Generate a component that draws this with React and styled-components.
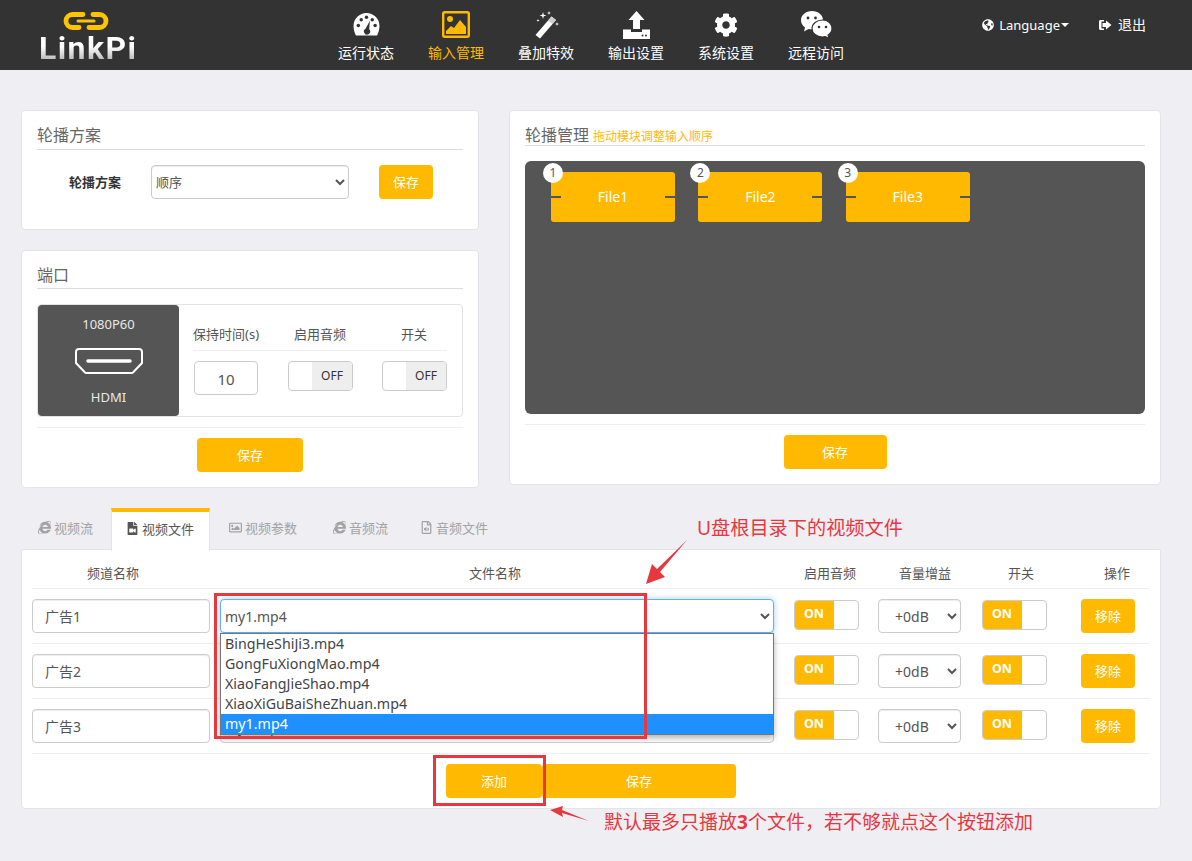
import React from "react";
import styled, { createGlobalStyle } from "styled-components";
import { FaCog, FaInternetExplorer, FaRegImage, FaRegFileAudio, FaFileVideo, FaGlobeAmericas } from "react-icons/fa";

const GOLD = "#ffb900";
const RED = "#e8383f";

const Global = createGlobalStyle`
  html, body { margin: 0; padding: 0; background: #eeeef3; }
  body { font-family: "Noto Sans", "Noto Sans CJK SC", sans-serif; font-size: 13px; color: #555; }
  * { box-sizing: border-box; }
`;

const Page = styled.div`position: relative; width: 1192px; height: 861px; overflow: hidden;`;

const Header = styled.header`display: flex; height: 70px; background: #333; color: #fff;`;
const Logo = styled.div`width: 321px; padding: 11px 0 0 39px; display: flex; flex-direction: column;`;
const LogoMark = styled.svg`width: 46px; height: 20px; margin-left: 24px;`;
const LogoText = styled.div`
  font-family: Roboto, sans-serif; font-weight: 700; font-size: 32px; line-height: 32px; letter-spacing: 1.4px;
  margin-top: 1px;
  background: linear-gradient(#ffffff 45%, #bdbdbd 85%); -webkit-background-clip: text; background-clip: text; color: transparent;
`;
const Nav = styled.nav`display: flex;`;
const NavItem = styled.div`
  width: 90px; height: 70px; display: flex; flex-direction: column; align-items: center;
  color: ${p => (p.$active ? GOLD : "#fff")};
`;
const NavIcon = styled.div`height: 44px; display: flex; align-items: center; justify-content: center; padding-top: 5px; font-size: 24px;`;
const NavLabel = styled.div`font-size: 14px; line-height: 18px;`;
const HeaderRight = styled.div`margin-left: auto; padding: 15px 46px 0 0; display: flex; gap: 30px; font-size: 13px; line-height: 20px;`;
const HeaderLink = styled.div`display: flex; align-items: center; height: 20px; gap: ${p => p.$gap || 5}px;`;
const LinkText = styled.span`font-size: ${p => p.$size || 13}px;`;
const Caret = styled.span`width: 0; height: 0; border: 4px solid transparent; border-top-color: #fff; border-bottom: 0; margin-left: -4px;`;

const TopRow = styled.div`display: grid; grid-template-columns: 458px 652px; column-gap: 30px; padding: 40px 0 0 21px; align-items: start;`;
const LeftColumn = styled.div`display: flex; flex-direction: column; gap: 20px;`;
const Card = styled.section`
  background: #fff; border: 1px solid #e3e4e9; border-radius: 4px; padding: 14px 15px 0;
  height: ${p => p.$height}px;
`;
const CardTitle = styled.h3`
  margin: 0; height: ${p => p.$height}px; border-bottom: 1px solid #ddd; font-weight: 400; font-size: 16px; line-height: 21px; color: #666;
  display: flex; align-items: baseline; gap: 4px;
`;
const Hint = styled.span`font-size: 12px; color: ${GOLD};`;

const SchemeRow = styled.div`display: flex; align-items: center; padding: 15px 0 0 32px;`;
const SchemeLabel = styled.label`width: 82px; font-size: 13px; font-weight: 700; color: #333; padding-bottom: 2px;`;
const NativeSelect = styled.select`
  width: ${p => p.$width}px; height: 34px; background: #fff; border: 1px solid ${p => (p.$focus ? "#66afe9" : "#ccc")};
  border-radius: 4px; font: inherit; font-size: ${p => p.$size || 14}px; color: #555; padding: 0 ${p => p.$pad || 0}px;
  box-shadow: ${p => (p.$focus ? "0 0 6px rgba(102,175,233,.6)" : "inset 0 1px 1px rgba(0,0,0,.075)")};
  outline: none; display: block;
`;
const GoldButton = styled.button`
  width: ${p => p.$width}px; height: 34px; background: ${GOLD}; color: #fff; border: 0; border-radius: 4px;
  font: inherit; font-size: 13px; margin-left: ${p => p.$left || 0}px; padding: 0 0 2px; display: block;
`;
const CardFooter = styled.div`
  border-top: 1px solid #eee; margin-top: ${p => p.$top}px; padding-top: 10px; display: flex; justify-content: center;
`;

const PortBox = styled.div`display: flex; height: 113px; margin-top: 15px; border: 1px solid #e3e3e3; border-radius: 4px;`;
const PortThumb = styled.div`
  width: 141px; background: #555; color: #e8e8e8; border-radius: 4px; display: flex; flex-direction: column; align-items: center;
  padding-top: 10px; font-size: 13px; line-height: 18px;
`;
const HdmiIcon = styled.svg`width: 68px; height: 26px; margin: 15px 0 14px;`;
const PortFields = styled.div`flex: 1; padding: 20px 15px 0 14px;`;
const FieldGrid = styled.div`display: grid; grid-template-columns: 95px 94px 65px;`;
const FieldHead = styled.div`
  height: 26px; border-bottom: 1px solid #eee; font-size: 13px; line-height: 18px; color: #555; padding-left: ${p => p.$indent || 0}px;
`;
const FieldCell = styled.div`padding: 10px 0 0 ${p => p.$indent || 0}px;`;
const NumberBox = styled.div`
  width: 64px; height: 34px; border: 1px solid #ccc; border-radius: 4px; font-size: 15px; line-height: 34px; text-align: center; color: #555;
`;

const Toggle = styled.div`display: flex; width: 65px; height: 30px; border: 1px solid #ccc; border-radius: 4px; overflow: hidden; background: #fff;`;
const ToggleOn = styled.div`width: 40px; margin: -1px 0 -1px -1px; background: ${GOLD}; color: #fff; font-weight: 700; font-size: 12.5px; line-height: 28px; text-align: center;`;
const ToggleBlank = styled.div`flex: 1;`;
const ToggleOff = styled.div`width: 40px; background: #eee; color: #333; font-size: 12px; line-height: 28px; text-align: center;`;

const Stage = styled.div`
  height: 253px; margin-top: 15px; background: #555; border-radius: 6px; padding: 11px 0 0 26px; display: flex; gap: 23.4px; align-items: flex-start;
`;
const Node = styled.div`
  position: relative; width: 124px; height: 50px; background: ${GOLD}; border-radius: 3px; color: #fff; font-size: 14px; line-height: 50px; text-align: center;
`;
const NodeBadge = styled.span`
  position: absolute; left: -8px; top: -9px; width: 20px; height: 20px; border-radius: 50%; background: #fff; color: #555;
  font-size: 12px; line-height: 19px; text-align: center;
`;
const NodePort = styled.span`
  position: absolute; top: 24px; ${p => p.$side}: -1px; width: 11px; height: 2px; background: #555;
`;

const TabsArea = styled.div`margin: 20px 0 0 21px; width: 1140px;`;
const TabBar = styled.div`display: flex; height: 42px; position: relative; z-index: 1; margin-bottom: -1px;`;
const Tab = styled.div`
  display: flex; align-items: center; gap: 3px; padding: 0 0 ${p => (p.$active ? 7 : 8)}px ${p => p.$pad}px; height: ${p => (p.$active ? 43 : 42)}px; width: ${p => p.$width}px; flex: none;
  font-size: 13px; white-space: nowrap; color: ${p => (p.$active ? "#555" : "#a3a3a3")};
  background: ${p => (p.$active ? "#fff" : "transparent")};
  border-top: 4px solid ${p => (p.$active ? GOLD : "transparent")};
  border-left: 1px solid ${p => (p.$active ? "#e3e4e9" : "transparent")};
  border-right: 1px solid ${p => (p.$active ? "#e3e4e9" : "transparent")};
`;
const Panel = styled.section`background: #fff; border: 1px solid #e3e4e9; border-radius: 0 0 4px 4px; height: 260px; padding: 0 10px;`;
const Row = styled.div`
  display: grid; grid-template-columns: 188px 574px 84px 104px 99px 69px; height: ${p => (p.$head ? 39 : 55)}px;
  border-bottom: 1px solid #eee; ${p => !p.$head && "padding-top: 10px;"}
`;
const HeadCell = styled.div`font-size: 13px; line-height: 47px; height: 38px; color: #555; padding-left: ${p => p.$indent}px;`;
const SelectCell = styled.div`position: relative; z-index: ${p => (p.$open ? 3 : 1)};`;
const TextBox = styled.div`
  width: 178px; height: 34px; border: 1px solid #ccc; border-radius: 4px; padding-left: 12px; font-size: 14px; line-height: 33px; color: #555;
  box-shadow: inset 0 1px 1px rgba(0,0,0,.075);
`;
const Cell = styled.div`padding-top: ${p => p.$top || 0}px;`;
const Dropdown = styled.ul`
  position: absolute; left: 0; top: 34px; width: 554px; height: 102px; margin: 0; padding: 0; list-style: none; background: #fff;
  border: 1px solid #767676; border-top-color: #5f7d96; box-shadow: 0 3px 6px rgba(0,0,0,.3);
`;
const Option = styled.li`
  height: 20px; line-height: 20px; padding-left: 4px; font-size: 14.25px; color: ${p => (p.$selected ? "#fff" : "#444")};
  background: ${p => (p.$selected ? "#1e90ff" : "#fff")};
`;
const PanelFooter = styled.div`display: flex; justify-content: center; padding-top: 10px;`;

const Callout = styled.div`
  position: absolute; left: ${p => p.$x}px; top: ${p => p.$y}px; color: ${RED}; font-size: ${p => p.$size}px; line-height: 26px; white-space: nowrap;
`;
const CalloutBox = styled.div`
  position: absolute; left: ${p => p.$x}px; top: ${p => p.$y}px; width: ${p => p.$w}px; height: ${p => p.$h}px; border: 3px solid ${RED}; z-index: 5;
`;
const ArrowLayer = styled.svg`position: absolute; left: 0; top: 0; width: 1192px; height: 861px; z-index: 5; pointer-events: none;`;

const Gauge = () => (
  <svg width="27" height="25" viewBox="0 0 28 26">
    <path d="M14 1A13.5 13.5 0 0 0 .5 14.5c0 3.5 1 7 2.5 10h22c1.500-3 2.500-6.500 2.500-10A13.500 13.500 0 0 0 14 1z" fill="#fff" />
    <g fill="#333">
      <circle cx="5.500" cy="14" r="1.800" /><circle cx="8.500" cy="8" r="1.800" /><circle cx="14" cy="5.500" r="1.800" /><circle cx="20" cy="8" r="1.800" /><circle cx="23" cy="14" r="1.800" />
      <path d="M17.500 9 16.800 18a3.200 3.200 0 1 1-3.800-.500z" />
    </g>
  </svg>
);
const ImageFrame = () => (
  <svg width="28" height="27" viewBox="0 0 28 27">
    <rect x="1.200" y="1.200" width="25.600" height="24.600" rx="1.500" fill="none" stroke={GOLD} strokeWidth="2.400" />
    <circle cx="8" cy="8" r="3" fill={GOLD} />
    <path d="M4 23v-3l5-5 3 2 6-8 6 7v7z" fill={GOLD} />
  </svg>
);
const Wand = () => (
  <svg width="27" height="28" viewBox="0 0 27 28" fill="#fff">
    <path d="M18.500 5.500 23 9 7 27.500 2.500 24z" />
    <path d="M18.500 5.500 23 9 19.500 13 15 9.500z" fill="#ccc" />
    <path d="M10 1l.8 2.700L13.500 4.500l-2.700.8L10 8l-.8-2.700L6.500 4.500l2.700-.8zM24 11l.5 1.500 1.500.5-1.500.5-.5 1.500-.5-1.500L22 13l1.500-.5zM16 0l.5 1.500L18 2l-1.500.5L16 4l-.5-1.500L14 2l1.500-.5zM5 8l.4 1.100 1.100.4-1.100.4L5 11l-.4-1.100-1.100-.4 1.100-.4z" />
  </svg>
);
const UploadIcon = () => (
  <svg width="27" height="28" viewBox="0 0 27 28" fill="#fff">
    <path d="M13.500 0 21.500 9h-4.500v9h-7V9H5.500z" />
    <path d="M0 18.500h8V21h11v-2.500h8V28H0z" />
    <circle cx="19.500" cy="24.500" r="1" fill="#333" /><circle cx="23" cy="24.500" r="1" fill="#333" />
  </svg>
);
const Wechat = () => (
  <svg width="33" height="29" viewBox="0 0 33 29">
    <path d="M12 1C5.800 1 1 5 1 10.200c0 3 1.600 5.500 4 7.200L4 21.500l4.500-2.500c1.100.3 2.300.5 3.500.5 6.200 0 11-4.100 11-9.300S18.200 1 12 1z" fill="#fff" />
    <circle cx="8" cy="8" r="1.400" fill="#333" /><circle cx="15.500" cy="8" r="1.400" fill="#333" />
    <path d="M22.500 10C16.700 10 12 13.800 12 18.500S16.700 27 22.500 27c1 0 2-.1 2.900-.4l3.600 2-.9-3.500c2.300-1.600 3.900-4 3.900-6.600C32 13.800 28.300 10 22.500 10z" fill="#fff" stroke="#333" strokeWidth="1.200" />
    <circle cx="19" cy="17" r="1.300" fill="#333" /><circle cx="26" cy="17" r="1.300" fill="#333" />
  </svg>
);
const LogOut = () => (
  <svg width="13" height="12" viewBox="0 0 13 12" fill="#fff">
    <path d="M1.500 1H5v1.500H2.500v7H5V11H1.500C.7 11 0 10.300 0 9.500v-7C0 1.700.7 1 1.500 1z" />
    <path d="M7 1.500 12.500 6 7 10.500V8H3.500V4H7z" />
  </svg>
);

const navItems = [
  ["运行状态", <Gauge />], ["输入管理", <ImageFrame />, true], ["叠加特效", <Wand />],
  ["输出设置", <UploadIcon />], ["系统设置", <FaCog />], ["远程访问", <Wechat />],
];
const tabs = [
  ["视频流", <FaInternetExplorer />, 90, 16], ["视频文件", <FaFileVideo />, 99, 14, true], ["视频参数", <FaRegImage />, 106, 18],
  ["音频流", <FaInternetExplorer />, 89, 16], ["音频文件", <FaRegFileAudio />, 100, 14],
];
const files = ["BingHeShiJi3.mp4", "GongFuXiongMao.mp4", "XiaoFangJieShao.mp4", "XiaoXiGuBaiSheZhuan.mp4", "my1.mp4"];

const OnToggle = () => <Toggle><ToggleOn>ON</ToggleOn><ToggleBlank /></Toggle>;
const OffToggle = () => <Toggle><ToggleBlank /><ToggleOff>OFF</ToggleOff></Toggle>;

export default function App() {
  return (
    <Page>
      <Global />
      <Header>
        <Logo>
          <LogoMark viewBox="0 0 46 20" fill="none" strokeLinecap="round">
            <defs>
              <linearGradient id="chainGold" x1="0" y1="0" x2="0" y2="1">
                <stop offset="0" stopColor="#ffd000" />
                <stop offset="1" stopColor="#e6a400" />
              </linearGradient>
            </defs>
            <g stroke="#ffc400" strokeWidth="4.800">
              <path d="M20 3.500H9.500a6.500 6.500 0 0 0 0 13H16" />
              <path d="M26 16.500h10.500a6.500 6.500 0 0 0 0-13H30" />
            </g>
            <path d="M15 10h16" stroke="#ffc400" strokeWidth="3" />
          </LogoMark>
          <LogoText>LinkPi</LogoText>
        </Logo>
        <Nav>
          {navItems.map(([label, icon, active]) => (
            <NavItem key={label} $active={active}>
              <NavIcon>{icon}</NavIcon>
              <NavLabel>{label}</NavLabel>
            </NavItem>
          ))}
        </Nav>
        <HeaderRight>
          <HeaderLink $gap={5}><FaGlobeAmericas size={12} /><LinkText>Language</LinkText><Caret /></HeaderLink>
          <HeaderLink $gap={6}><LogOut /><LinkText $size={14}>退出</LinkText></HeaderLink>
        </HeaderRight>
      </Header>

      <TopRow>
        <LeftColumn>
          <Card $height={120}>
            <CardTitle $height={25}>轮播方案</CardTitle>
            <SchemeRow>
              <SchemeLabel>轮播方案</SchemeLabel>
              <NativeSelect $width={198} $size={13} defaultValue="顺序"><option>顺序</option></NativeSelect>
              <GoldButton $width={54} $left={30}>保存</GoldButton>
            </SchemeRow>
          </Card>
          <Card $height={238}>
            <CardTitle $height={24}>端口</CardTitle>
            <PortBox>
              <PortThumb>
                1080P60
                <HdmiIcon viewBox="0 0 68 26" fill="none" stroke="#fff">
                  <path d="M4 1h60a3 3 0 0 1 3 3v11l-9 9.500a2 2 0 0 1-1.500.5H11.500a2 2 0 0 1-1.500-.5L1 15V4a3 3 0 0 1 3-3z" strokeWidth="2" />
                  <path d="M13 13h42" strokeWidth="3.500" strokeLinecap="round" />
                </HdmiIcon>
                HDMI
              </PortThumb>
              <PortFields>
                <FieldGrid>
                  <FieldHead>保持时间(s)</FieldHead>
                  <FieldHead $indent={6}>启用音频</FieldHead>
                  <FieldHead $indent={19}>开关</FieldHead>
                  <FieldCell $indent={1}><NumberBox>10</NumberBox></FieldCell>
                  <FieldCell><OffToggle /></FieldCell>
                  <FieldCell><OffToggle /></FieldCell>
                </FieldGrid>
              </PortFields>
            </PortBox>
            <CardFooter $top={10}><GoldButton $width={106}>保存</GoldButton></CardFooter>
          </Card>
        </LeftColumn>
        <Card $height={375}>
          <CardTitle $height={21}>轮播管理<Hint>拖动模块调整输入顺序</Hint></CardTitle>
          <Stage>
            {["File1", "File2", "File3"].map((name, i) => (
              <Node key={name}>
                {name}
                <NodeBadge>{i + 1}</NodeBadge>
                <NodePort $side="left" />
                <NodePort $side="right" />
              </Node>
            ))}
          </Stage>
          <CardFooter $top={10}><GoldButton $width={103}>保存</GoldButton></CardFooter>
        </Card>
      </TopRow>

      <TabsArea>
        <TabBar>
          {tabs.map(([label, icon, width, pad, active]) => (
            <Tab key={label} $active={active} $width={width} $pad={pad}>{icon}<span>{label}</span></Tab>
          ))}
        </TabBar>
        <Panel>
          <Row $head>
            <HeadCell $indent={55}>频道名称</HeadCell>
            <HeadCell $indent={249}>文件名称</HeadCell>
            <HeadCell $indent={10}>启用音频</HeadCell>
            <HeadCell $indent={21}>音量增益</HeadCell>
            <HeadCell $indent={26}>开关</HeadCell>
            <HeadCell $indent={23}>操作</HeadCell>
          </Row>
          {["广告1", "广告2", "广告3"].map((name, i) => (
            <Row key={name}>
              <Cell><TextBox>{name}</TextBox></Cell>
              <SelectCell $open={i === 0}>
                <NativeSelect $width={554} $focus={i === 0} defaultValue="my1.mp4"><option>my1.mp4</option></NativeSelect>
                {i === 0 && (
                  <Dropdown>
                    {files.map(f => <Option key={f} $selected={f === "my1.mp4"}>{f}</Option>)}
                  </Dropdown>
                )}
              </SelectCell>
              <Cell $top={1}><OnToggle /></Cell>
              <Cell><NativeSelect $width={83} $pad={12} defaultValue="+0dB"><option>+0dB</option></NativeSelect></Cell>
              <Cell $top={1}><OnToggle /></Cell>
              <Cell><GoldButton $width={54}>移除</GoldButton></Cell>
            </Row>
          ))}
          <PanelFooter>
            <GoldButton $width={96}>添加</GoldButton>
            <GoldButton $width={194}>保存</GoldButton>
          </PanelFooter>
        </Panel>
      </TabsArea>

      <CalloutBox $x={214} $y={593} $w={433} $h={146} />
      <CalloutBox $x={433} $y={755} $w={113} $h={51} />
      <ArrowLayer viewBox="0 0 1192 861" fill={RED}>
        <polygon points="687,540 660,572 665,577 646,584 652,564 657,569" />
        <polygon points="589,821 562,813 563,817 550,810 563,806 562,810" />
      </ArrowLayer>
      <Callout $x={697} $y={515} $size={19.2}>U盘根目录下的视频文件</Callout>
      <Callout $x={604} $y={809} $size={19}>默认最多只播放<b>3</b>个文件，若不够就点这个按钮添加</Callout>
    </Page>
  );
}
